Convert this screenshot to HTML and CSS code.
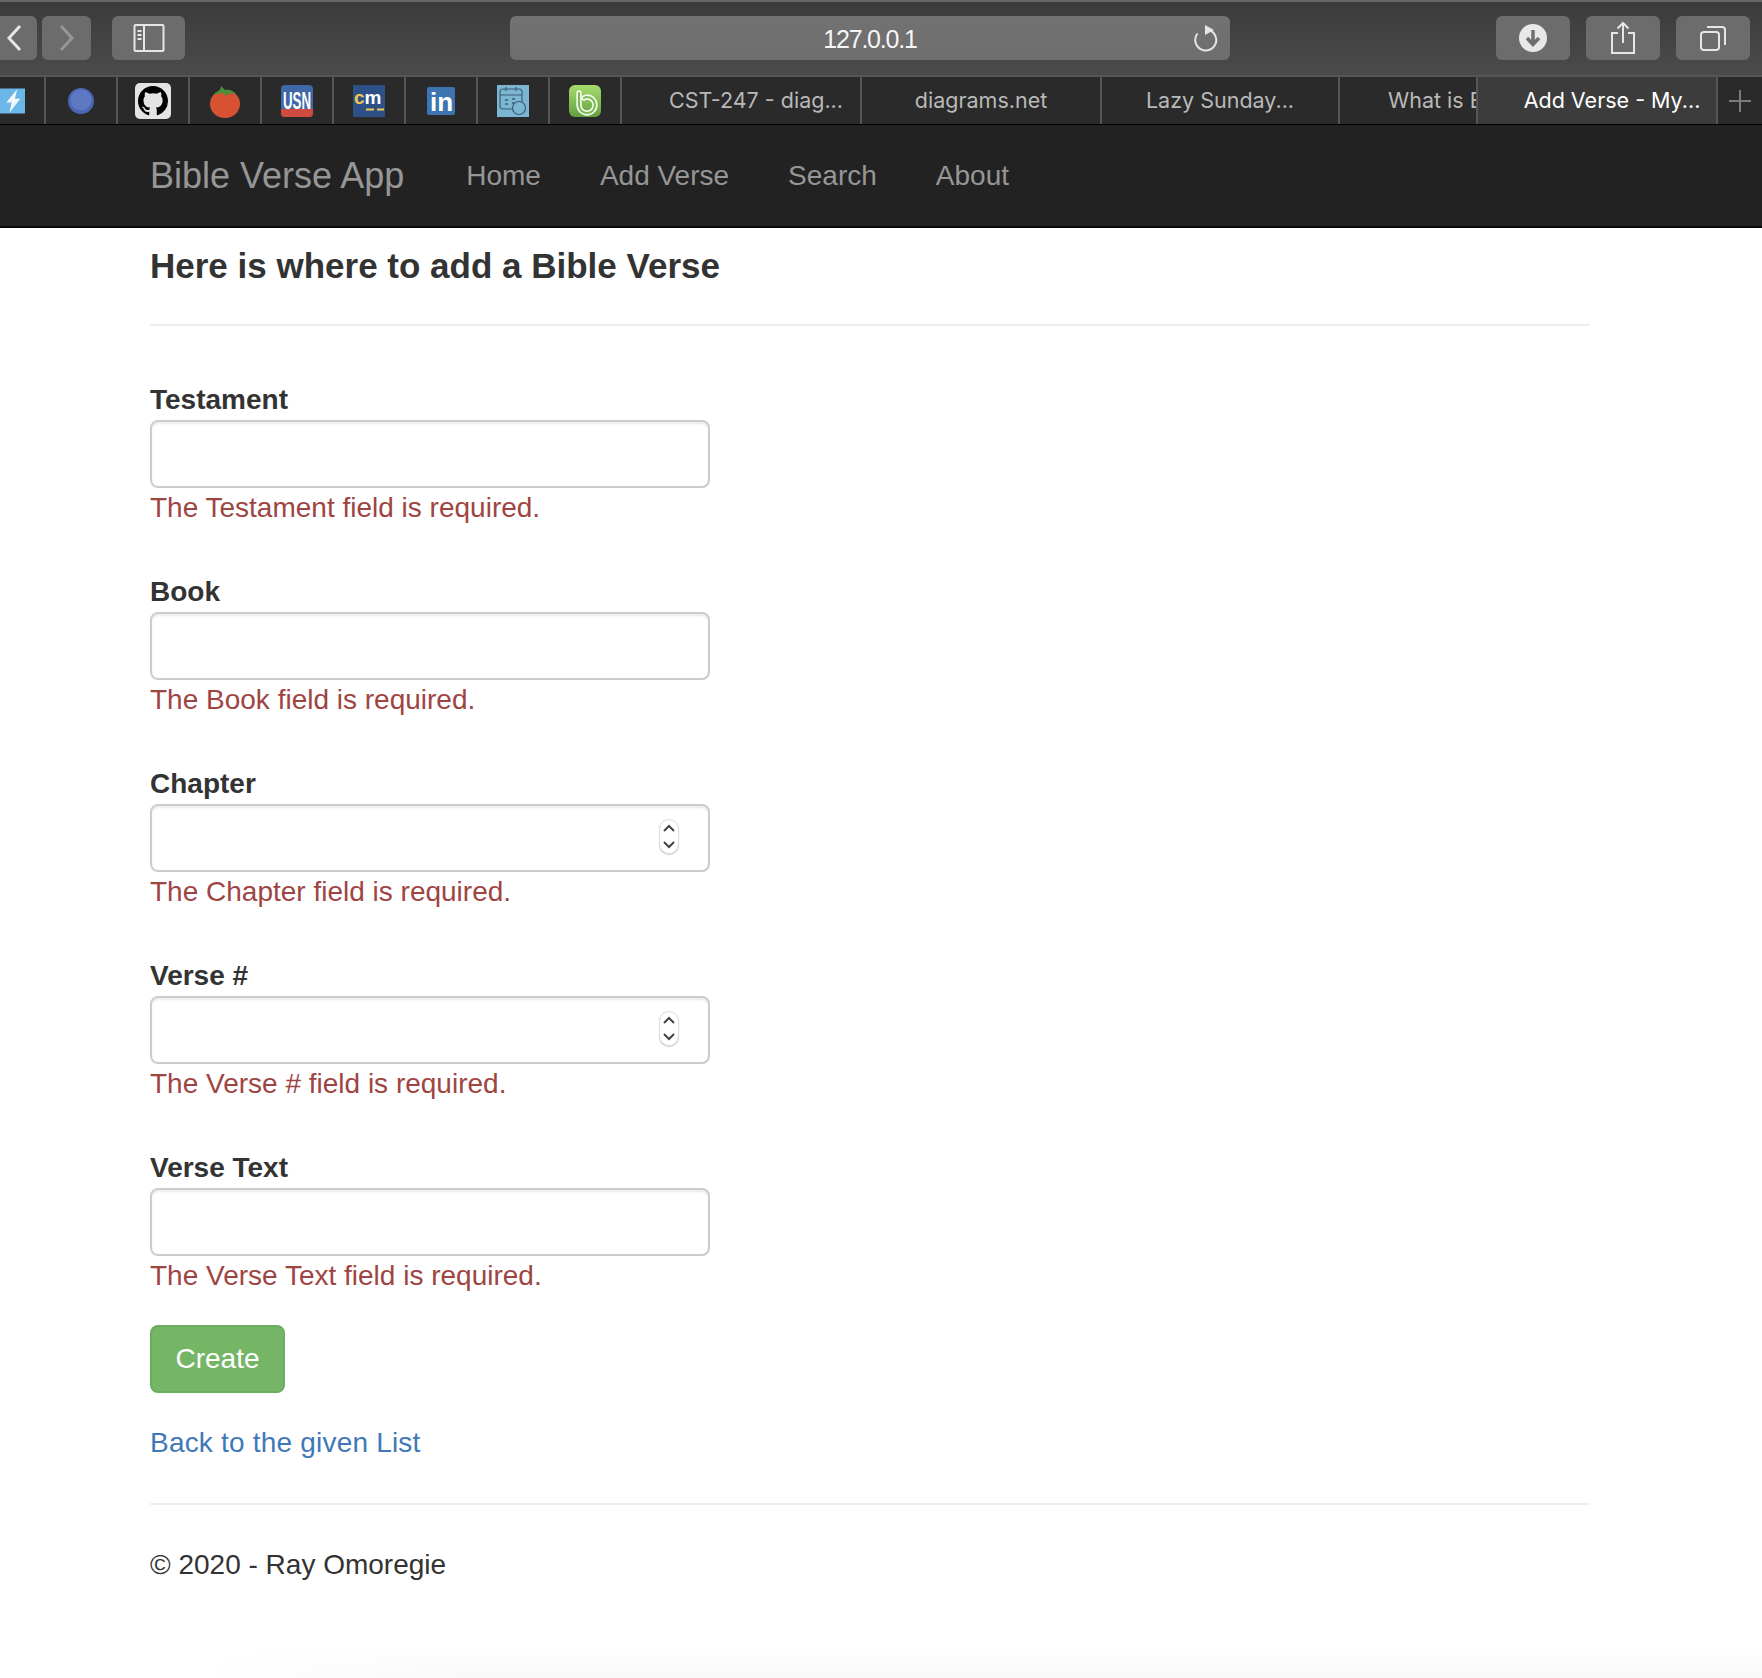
FILE: index.html
```html
<!DOCTYPE html>
<html>

<head>
    <title>Add Verse - My ASP.NET Application</title>
    <link rel="stylesheet" href="styles.css">
</head>

<body>
    <!-- barra do navegador -->
    <div class="toolbar">
        <div class="tool-btn back-btn">
            <svg width="16" height="28" viewBox="0 0 16 28"><path d="M14 2 3 14l11 12" class="stroke-light" stroke-width="3"/></svg>
        </div>
        <div class="tool-btn forward-btn">
            <svg width="16" height="28" viewBox="0 0 16 28"><path d="M2 2l11 12L2 26" class="stroke-dim" stroke-width="3"/></svg>
        </div>
        <div class="tool-btn sidebar-btn">
            <svg width="32" height="30" viewBox="0 0 32 30"><rect x="1.500" y="2" width="29" height="26" rx="1" class="stroke-light" stroke-width="2"/><path d="M11 2v26" class="stroke-light" stroke-width="2"/><path d="M4.500 8h4M4.500 12h4M4.500 16h4" class="stroke-light" stroke-width="2"/></svg>
        </div>
        <div class="url-bar">
            <span class="url-text">127.0.0.1</span>
            <svg class="reload-icon" width="26" height="30" viewBox="0 0 26 30"><path d="M5.500 11.500A10.500 10.500 0 1 0 14 7.500" class="stroke-light" stroke-width="2"/><path d="M13 3l9 5-9 5z" fill="#e6e6e6"/></svg>
        </div>
        <div class="tool-right">
            <div class="tool-btn wide-btn">
                <svg width="30" height="30" viewBox="0 0 30 30"><circle cx="15" cy="15" r="14" fill="#e8e8e8"/><path d="M15 7v13M9 15l6 6.500 6-6.500" fill="none" stroke="#6e6e6e" stroke-width="3.500"/></svg>
            </div>
            <div class="tool-btn wide-btn">
                <svg width="26" height="34" viewBox="0 0 26 34"><path d="M8 12H2v20h22V12h-6" class="stroke-light" stroke-width="2"/><path d="M13 22V2M7.500 7.500 13 2l5.500 5.500" class="stroke-light" stroke-width="2"/></svg>
            </div>
            <div class="tool-btn wide-btn">
                <svg width="26" height="26" viewBox="0 0 26 26"><rect x="1" y="7" width="18" height="18" rx="3" class="stroke-light" stroke-width="2"/><path d="M7 2h15a3 3 0 0 1 3 3v15" class="stroke-light" stroke-width="2"/></svg>
            </div>
        </div>
    </div>

    <!-- abas -->
    <div class="tab-bar">
        <div class="pin-tab first-pin">
            <svg width="32" height="32" viewBox="0 0 32 32"><rect width="32" height="32" fill="#6bb7e8"/><path d="M22 1 8 18h7l-3 13 14-18h-7z" fill="#f2f9fd"/></svg>
        </div>
        <div class="pin-tab">
            <svg width="26" height="26" viewBox="0 0 26 26"><circle cx="13" cy="13" r="13" fill="#4a66b5"/><circle cx="13" cy="12" r="10.500" fill="#5f78c2"/></svg>
        </div>
        <div class="pin-tab">
            <svg width="36" height="36" viewBox="0 0 36 36"><rect width="36" height="36" rx="5" fill="#e4e4e4"/><g transform="translate(3 3) scale(1.875)"><path fill="#000" d="M8 0C3.580 0 0 3.580 0 8c0 3.540 2.290 6.530 5.470 7.590.4.070.55-.17.55-.38 0-.19-.01-.82-.01-1.490-2.010.37-2.530-.49-2.690-.94-.09-.23-.48-.94-.82-1.130-.28-.15-.68-.52-.01-.53.63-.01 1.080.58 1.230.82.72 1.210 1.870.87 2.330.66.07-.52.28-.87.51-1.070-1.780-.2-3.640-.89-3.640-3.950 0-.87.31-1.590.82-2.150-.08-.2-.36-1.020.08-2.120 0 0 .67-.21 2.200.82.64-.18 1.320-.27 2-.27.68 0 1.360.09 2 .27 1.530-1.040 2.200-.82 2.200-.82.44 1.100.16 1.920.08 2.120.51.56.82 1.270.82 2.150 0 3.070-1.870 3.750-3.650 3.950.29.25.54.73.54 1.480 0 1.070-.01 1.930-.01 2.200 0 .21.15.46.55.38A8.013 8.013 0 0 0 16 8c0-4.420-3.580-8-8-8z"/></g></svg>
        </div>
        <div class="pin-tab">
            <svg width="32" height="34" viewBox="0 0 32 34"><ellipse cx="16" cy="20" rx="15" ry="14" fill="#d65232"/><path d="M4 11c4-4 8-4 8-9l4 4c4-1 8 0 11 4l-6-1-3 3-4-3z" fill="#4d8f3a"/></svg>
        </div>
        <div class="pin-tab">
            <svg width="32" height="32" viewBox="0 0 32 32"><rect width="32" height="32" rx="4" fill="#3f68a8"/><path d="M0 24h32v4a4 4 0 0 1-4 4H4a4 4 0 0 1-4-4z" fill="#cf4a3f"/><text x="2" y="24" class="logo-usn" textLength="28" lengthAdjust="spacingAndGlyphs">USN</text></svg>
        </div>
        <div class="pin-tab">
            <svg width="32" height="32" viewBox="0 0 32 32"><rect width="32" height="32" fill="#2d5187"/><text x="1" y="19" class="logo-cm">c<tspan fill="#fff">m</tspan></text><path d="M13 24.500h8M24 24.500h7" stroke="#f0c850" stroke-width="2"/></svg>
        </div>
        <div class="pin-tab">
            <svg width="28" height="28" viewBox="0 0 28 28"><rect width="28" height="28" rx="2" fill="#3e75b0"/><text x="3" y="24" class="logo-in">in</text></svg>
        </div>
        <div class="pin-tab">
            <svg width="32" height="32" viewBox="0 0 32 32"><rect width="32" height="32" fill="#7db6d2"/><rect x="3" y="4" width="22" height="20" rx="3" fill="none" stroke="#3c5f72" stroke-width="1.200"/><path d="M3 10h22M9 2v4M19 2v4" stroke="#3c5f72" stroke-width="1.200"/><path d="M8 19h3M8 15h3M15 14h3M15 18h2" stroke="#3c5f72" stroke-width="1.500"/><circle cx="22" cy="23" r="6.500" fill="#7db6d2" stroke="#3c5f72" stroke-width="1.200"/></svg>
        </div>
        <div class="pin-tab">
            <svg width="32" height="32" viewBox="0 0 32 32"><defs><linearGradient id="bGreen" x1="0" y1="0" x2="0" y2="1"><stop offset="0" stop-color="#a6dc6c"/><stop offset="1" stop-color="#64a041"/></linearGradient></defs><rect width="32" height="32" rx="6" fill="url(#bGreen)"/><path d="M10 8v12a8 8 0 1 0 8-8 5 5 0 0 0-3 1" fill="none" stroke="#f4faf0" stroke-width="5.400" stroke-linecap="round"/><path d="M10 8v12a8 8 0 1 0 8-8 5 5 0 0 0-3 1" fill="none" stroke="#7cba52" stroke-width="2.100" stroke-linecap="round"/></svg>
        </div>
        <div class="title-tab shifted-tab">CST-247 - diag...</div>
        <div class="title-tab">diagrams.net</div>
        <div class="title-tab narrow-tab">Lazy Sunday...</div>
        <div class="title-tab clipped-tab">What is Entity...</div>
        <div class="title-tab shifted-tab active-tab">Add Verse - My...</div>
        <div class="new-tab">
            <svg width="24" height="24" viewBox="0 0 24 24"><path d="M12 1v22M1 12h22" stroke="#7b7b7b" stroke-width="2"/></svg>
        </div>
    </div>

    <!-- site -->
    <nav class="navbar">
        <a class="navbar-brand" href="#">Bible Verse App</a>
        <a class="nav-link" href="#">Home</a>
        <a class="nav-link" href="#">Add Verse</a>
        <a class="nav-link" href="#">Search</a>
        <a class="nav-link" href="#">About</a>
    </nav>

    <div class="container">
        <h4 class="page-title">Here is where to add a Bible Verse</h4>
        <hr class="title-rule">

        <div class="form-group">
            <label>Testament</label>
            <input class="form-control" type="text">
            <span class="field-error">The Testament field is required.</span>
        </div>
        <div class="form-group">
            <label>Book</label>
            <input class="form-control" type="text">
            <span class="field-error">The Book field is required.</span>
        </div>
        <div class="form-group">
            <label>Chapter</label>
            <div class="number-wrap">
                <input class="form-control" type="text">
                <span class="spinner">
                    <svg width="12" height="25" viewBox="0 0 12 25"><path d="M1 7l5-5 5 5M1 18l5 5 5-5" fill="none" stroke="#444" stroke-width="2"/></svg>
                </span>
            </div>
            <span class="field-error">The Chapter field is required.</span>
        </div>
        <div class="form-group">
            <label>Verse #</label>
            <div class="number-wrap">
                <input class="form-control" type="text">
                <span class="spinner">
                    <svg width="12" height="25" viewBox="0 0 12 25"><path d="M1 7l5-5 5 5M1 18l5 5 5-5" fill="none" stroke="#444" stroke-width="2"/></svg>
                </span>
            </div>
            <span class="field-error">The Verse # field is required.</span>
        </div>
        <div class="form-group last-group">
            <label>Verse Text</label>
            <input class="form-control" type="text">
            <span class="field-error">The Verse Text field is required.</span>
        </div>

        <button class="btn-create">Create</button>
        <a class="back-link" href="#">Back to the given List</a>
        <hr class="footer-rule">
        <p class="copyright">© 2020 - Ray Omoregie</p>
    </div>
</body>

</html>
```

FILE: styles.css
```css
html,
body {
    margin: 0;
    height: 1678px;
    overflow: hidden;
}

body {
    font-family: "Liberation Sans", Arial, sans-serif;
    font-size: 28px;
    line-height: 40px;
    color: #333;
    background:
        linear-gradient(to right, #fff 200px, rgba(255, 255, 255, 0) 500px),
        linear-gradient(to bottom, #fff 1645px, #f8f8f8 1678px);
}

/* barra do navegador */
.toolbar {
    display: flex;
    align-items: flex-start;
    box-sizing: border-box;
    height: 75px;
    padding-top: 16px;
    background: linear-gradient(to bottom, #3b3b3b, #4b4b4b);
    border-top: 2px solid #686868;
}

.toolbar .tool-btn,
.url-bar {
    margin-top: -2px;
}

.tool-btn {
    display: flex;
    align-items: center;
    justify-content: center;
    height: 44px;
    background: #6c6c6c;
    border-radius: 6px;
}

.back-btn {
    width: 37px;
    border-radius: 0 6px 6px 0;
    justify-content: flex-start;
}

.back-btn svg {
    margin-left: 6px;
}

.forward-btn {
    width: 49px;
    margin-left: 5px;
}

.sidebar-btn {
    width: 73px;
    margin-left: 21px;
}

.stroke-light {
    fill: none;
    stroke: #e6e6e6;
}

.stroke-dim {
    fill: none;
    stroke: #969696;
}

.url-bar {
    position: relative;
    display: flex;
    align-items: center;
    justify-content: center;
    width: 720px;
    height: 44px;
    margin-left: 325px;
    background: linear-gradient(to bottom, #727272, #6e6e6e);
    border-radius: 6px;
}

.url-text {
    padding-top: 2px;
    font-size: 25px;
    letter-spacing: -1.2px;
    color: #f5f5f5;
}

.reload-icon {
    position: absolute;
    right: 12px;
    top: 6px;
}

.tool-right {
    display: flex;
    gap: 16px;
    margin-left: auto;
    padding-right: 12px;
}

.wide-btn {
    width: 74px;
}

/* abas */
.tab-bar {
    display: flex;
    height: 50px;
    background: #2a2a2a;
    border-top: 2px solid #555;
    box-sizing: border-box;
    border-bottom: 1px solid #000;
}

.pin-tab {
    display: flex;
    align-items: center;
    justify-content: center;
    flex: none;
    width: 70px;
    border-right: 2px solid #555;
}

.first-pin {
    justify-content: flex-end;
    box-sizing: content-box;
    width: 25px;
    padding-right: 19px;
    overflow: hidden;
}

.logo-usn {
    font-family: "Liberation Sans", sans-serif;
    font-size: 24px;
    font-weight: bold;
    fill: #fff;
}

.logo-cm {
    font-family: "Liberation Sans", sans-serif;
    font-size: 19px;
    font-weight: bold;
    fill: #f0c850;
}

.logo-in {
    font-family: "Liberation Sans", sans-serif;
    font-size: 26px;
    font-weight: bold;
    fill: #fff;
}

.title-tab {
    flex: none;
    box-sizing: border-box;
    width: 240px;
    border-right: 2px solid #555;
    font-family: "Inter", "Liberation Sans", sans-serif;
    font-size: 21.500px;
    line-height: 46px;
    text-align: center;
    color: #b9b9b9;
    white-space: nowrap;
    overflow: hidden;
}

.shifted-tab {
    padding-left: 30px;
}

.narrow-tab {
    width: 238px;
}

.clipped-tab {
    width: 136px;
    border-right: none;
    padding-left: 48px;
    text-align: left;
}

.active-tab {
    width: 242px;
    background: #3c3c3c;
    border-left: 2px solid #555;
    color: #fff;
}

.new-tab {
    display: flex;
    flex: 1;
    align-items: center;
    justify-content: center;
}

/* site */
.navbar {
    display: flex;
    align-items: center;
    box-sizing: border-box;
    height: 103px;
    padding: 0 150px;
    background: #222;
    border-bottom: 2px solid #080808;
}

.navbar a {
    color: #969696;
    text-decoration: none;
}

.navbar-brand {
    font-size: 36px;
    margin-right: 32.500px;
}

.nav-link {
    padding: 0 29.500px;
}

.container {
    width: 1440px;
    margin-left: 150px;
}

.page-title {
    margin: 18px 0 0;
    font-size: 35px;
    line-height: 40px;
    font-weight: bold;
}

.title-rule {
    margin: 38px 0 54px;
}

hr {
    height: 2px;
    border: none;
    background: #eee;
}

.form-group {
    margin-bottom: 44px;
}

.form-group label {
    display: block;
    font-weight: bold;
    line-height: 40px;
}

.form-control {
    display: block;
    box-sizing: border-box;
    width: 560px;
    height: 68px;
    background: #fff;
    border: 2px solid #ccc;
    border-radius: 8px;
    box-shadow: inset 0 2px 2px rgba(0, 0, 0, .075);
}

.number-wrap {
    position: relative;
    width: 560px;
}

.spinner {
    position: absolute;
    top: 15px;
    right: 31px;
    display: flex;
    align-items: center;
    justify-content: center;
    box-sizing: border-box;
    width: 20px;
    height: 35px;
    border: 1px solid #ddd;
    border-radius: 10px;
    background: #fff;
    box-shadow: 0 1px 1px rgba(0, 0, 0, .2);
}

.field-error {
    display: block;
    color: #9e4543;
}

.last-group {
    margin-bottom: 29px;
}

.btn-create {
    display: block;
    width: 135px;
    height: 68px;
    padding: 0;
    background: #74b666;
    border: 2px solid #6bad5f;
    border-radius: 8px;
    color: #fff;
    font-family: inherit;
    font-size: 28px;
}

.back-link {
    display: block;
    margin-top: 30px;
    color: #3f78b8;
    letter-spacing: .2px;
    text-decoration: none;
}

.footer-rule {
    margin: 40px 0 40px;
}

.copyright {
    margin: 0;
}
```
